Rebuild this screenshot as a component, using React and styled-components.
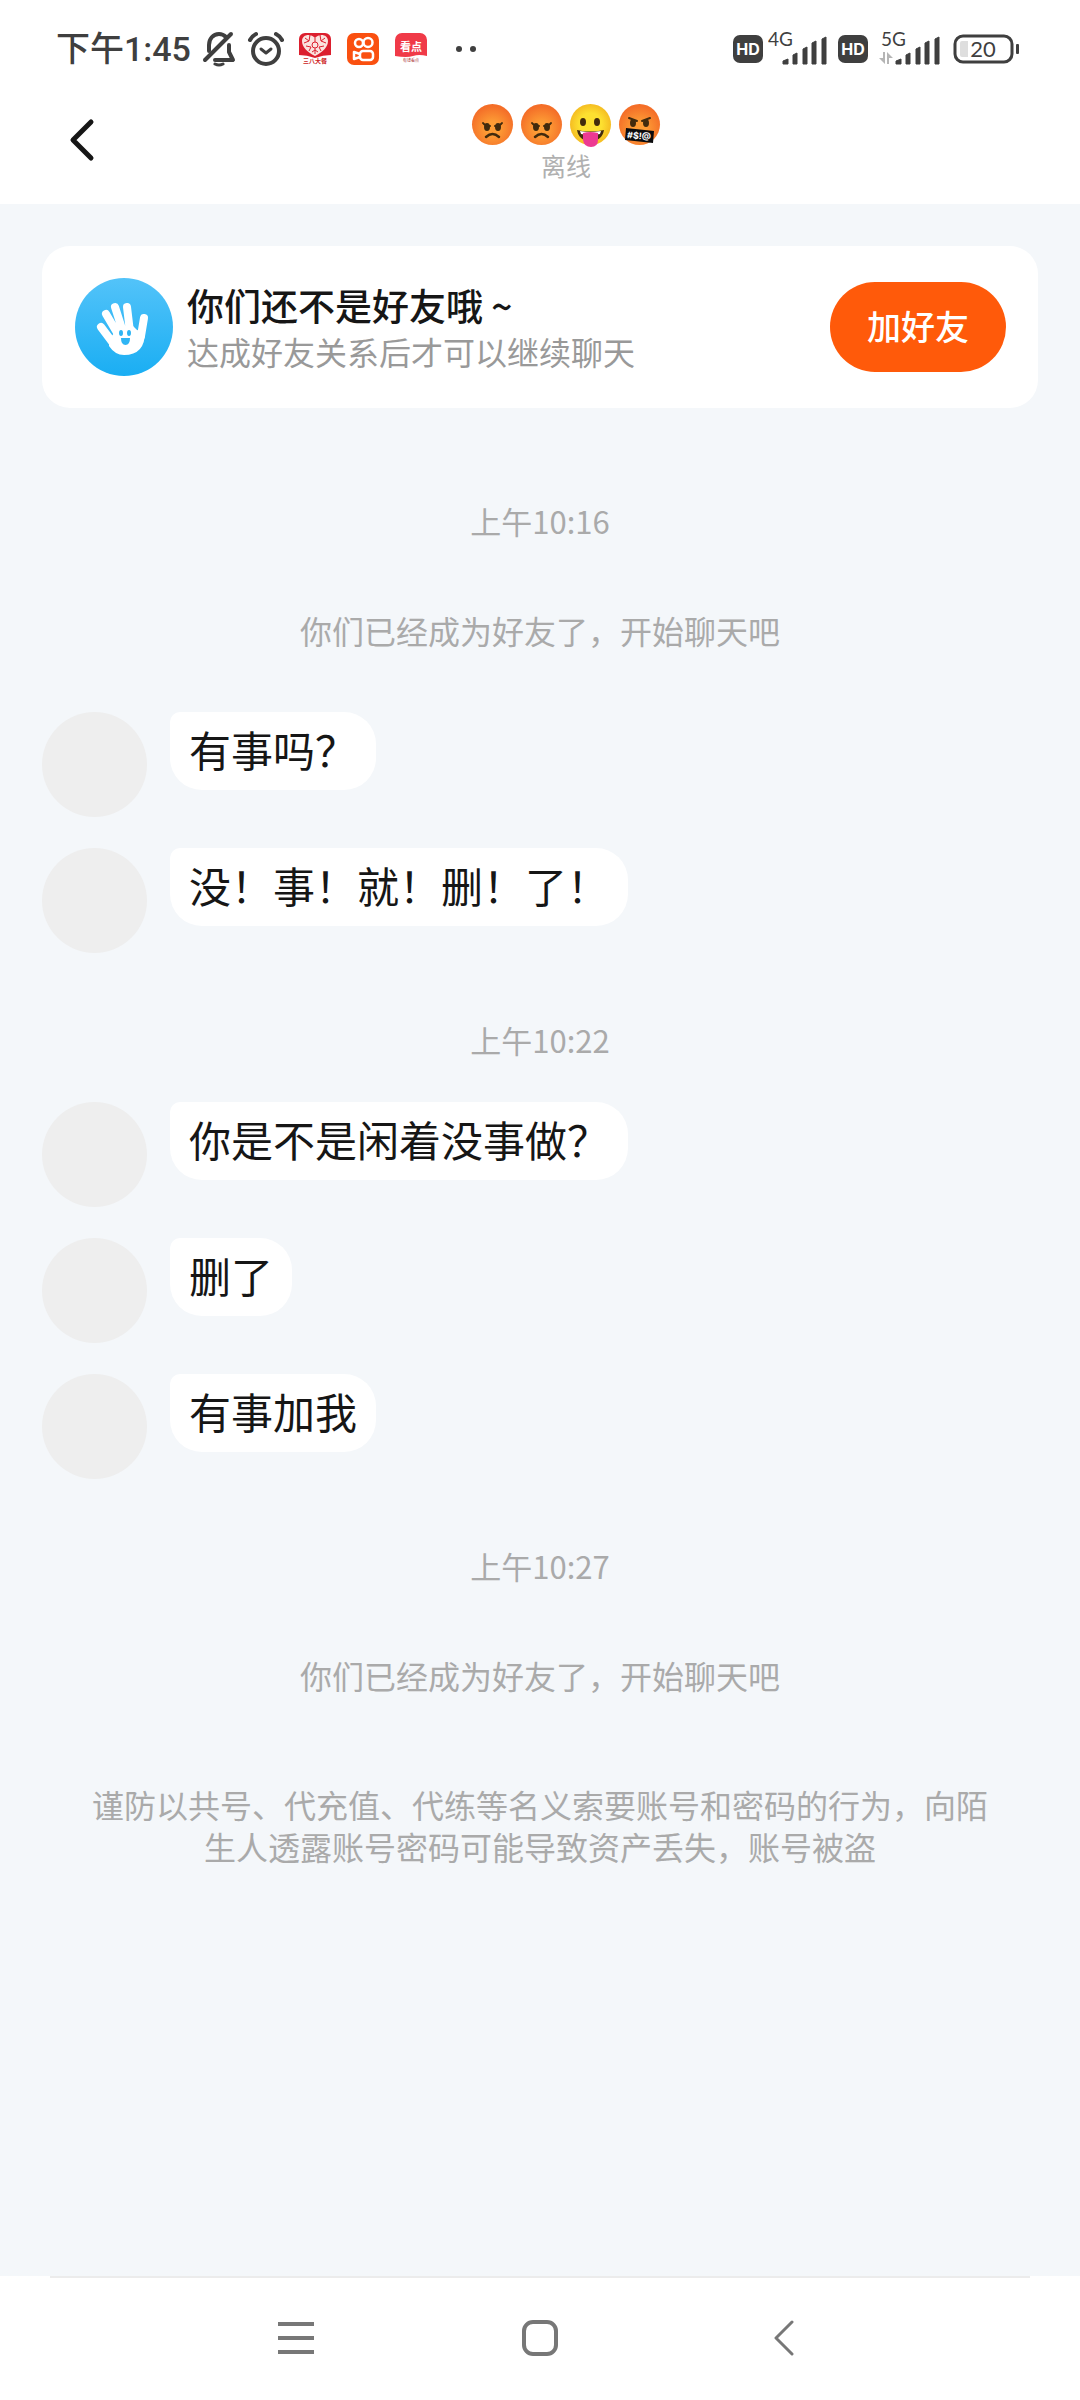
import React from "react";
import styled, { createGlobalStyle } from "styled-components";

const GlobalStyle = createGlobalStyle`
  * {
    box-sizing: border-box;
  }

  body {
    margin: 0;
    background: #f4f7fa;
    font-family: "Noto Sans CJK SC", sans-serif;
  }

  svg {
    display: block;
    flex: none;
  }
`;

const Page = styled.div`
  display: flex;
  flex-direction: column;
  min-height: 100vh;
`;

const StatusBar = styled.div`
  display: flex;
  align-items: center;
  justify-content: space-between;
  height: 98px;
  padding: 0 60px 0 56px;
  background: #fff;
  color: #3f3f3f;
`;

const StatusGroup = styled.div`
  display: flex;
  align-items: center;
  gap: ${({ $gap }) => $gap}px;
`;

const Clock = styled.span`
  font-family: Roboto, "Noto Sans CJK SC", sans-serif;
  font-size: 34px;
  font-weight: 500;
  line-height: 48px;
`;

const Header = styled.header`
  display: flex;
  align-items: center;
  height: 106px;
  padding: 0 56px 20px;
  background: #fff;
`;

const IconButton = styled.button`
  display: flex;
  align-items: center;
  justify-content: center;
  width: ${({ $width }) => $width}px;
  height: 60px;
  padding: 0;
  border: none;
  background: none;
`;

const HeaderTitle = styled.div`
  display: flex;
  flex: 1;
  flex-direction: column;
  align-items: center;
  padding-top: 4px;
`;

const Nickname = styled.h1`
  display: flex;
  gap: 8px;
  margin: 0;
`;

const Presence = styled.span`
  color: #b0b0b0;
  font-size: 25px;
  line-height: 36px;
`;

const Chat = styled.main`
  display: flex;
  flex: 1;
  flex-direction: column;
  padding: 42px 42px 60px;
  background: #f4f7fa;
`;

const FriendCard = styled.section`
  display: flex;
  align-items: center;
  gap: 14px;
  height: 162px;
  margin-bottom: 26px;
  padding: 0 32px 0 33px;
  border-radius: 28px;
  background: #fff;
`;

const CardText = styled.div`
  flex: 1;
`;

const CardTitle = styled.h2`
  margin: 0;
  color: #161616;
  font-size: 37px;
  font-weight: 500;
  line-height: 48px;
`;

const CardHint = styled.p`
  margin: 0;
  color: #999;
  font-size: 32px;
  line-height: 44px;
`;

const AddButton = styled.button`
  width: 176px;
  height: 90px;
  padding: 0 0 3px;
  border: none;
  border-radius: 45px;
  background: #ff5a0a;
  color: #fff;
  font-family: inherit;
  font-size: 34px;
  font-weight: 500;
`;

const Time = styled.time`
  margin-top: 66px;
  color: #aaa;
  font-size: 31px;
  line-height: 42px;
  text-align: center;
`;

const Notice = styled.p`
  margin: 67px 0 20px;
  padding: 0 48px;
  color: #aaa;
  font-size: 32px;
  line-height: 42px;
  text-align: center;
`;

const Messages = styled.ul`
  display: flex;
  flex-direction: column;
  gap: 31px;
  margin: 41px 0 0;
  padding: 0;
  list-style: none;
`;

const Message = styled.li`
  display: flex;
  align-items: flex-start;
  gap: 23px;
`;

const Avatar = styled.div`
  flex: none;
  width: 105px;
  height: 105px;
  border-radius: 50%;
  background: #eee;
`;

const Bubble = styled.div`
  padding: 7px 19px 11px;
  border-radius: 10px 32px 32px 32px;
  background: #fff;
  color: #161616;
  font-size: 42px;
  line-height: 60px;
`;

const NavBar = styled.nav`
  padding: 0 50px;
  background: #fff;
`;

const NavButtons = styled.div`
  display: flex;
  justify-content: center;
  height: 124px;
  padding-top: 30px;
  border-top: 2px solid #ececec;
`;

const BellOff = () => (
  <svg width="34" height="36" viewBox="0 0 34 36" fill="none" stroke="#3f3f3f" strokeWidth="4" strokeLinecap="round" strokeLinejoin="round">
    <path d="M7 20v-6c0-6 4-11 10-11 3 0 5 1 7 3M27 14v7l4 8H13" />
    <path d="M3 29L29 3" />
    <path d="M13 33q4 2 8 0" strokeWidth="3" />
  </svg>
);

const Alarm = () => (
  <svg width="38" height="36" viewBox="0 0 38 36" fill="none" stroke="#3f3f3f" strokeWidth="4" strokeLinecap="round" strokeLinejoin="round">
    <circle cx="19" cy="20" r="13" />
    <path d="M3 9q2-4 6-6M35 9q-2-4-6-6" />
    <path d="M14 18l5 4 5-4" strokeWidth="3" />
  </svg>
);

const HeartApp = () => (
  <svg width="32" height="32" viewBox="0 0 32 32">
    <path d="M0 22V6a6 6 0 016-6h20a6 6 0 016 6v16q-8 0-16 3Q8 22 0 22z" fill="#dc1f2e" />
    <path d="M16 23C8 19 3 14 3 8c0-7 9-8 13-3 4-5 13-4 13 3 0 6-5 11-13 15z" fill="#fbe3df" />
    <g stroke="#dc1f2e" fill="none">
      <path d="M6 5l4 3-5 2M11 2l-1 6M26 5l-4 3 5 2M21 2l1 6M7 13l5 1-2 4M25 13l-5 1 2 4M16 5v4M16 15v6M13 19l3-2 3 2" />
      <circle cx="16" cy="12" r="3" />
    </g>
    <text x="16" y="30" fontSize="6" fontWeight="700" textAnchor="middle" fill="#c22">三八大餐</text>
  </svg>
);

const VideoApp = () => (
  <svg width="32" height="32" viewBox="0 0 32 32">
    <rect width="32" height="32" rx="7" fill="#fa5010" />
    <g fill="none" stroke="#fff" strokeWidth="2.5">
      <circle cx="12" cy="10" r="4" />
      <circle cx="21" cy="9.500" r="4.500" />
      <rect x="13" y="18" width="13" height="9" rx="3" />
      <path d="M13 21l-6-2v7l6-2" strokeLinejoin="round" />
    </g>
  </svg>
);

const NewsApp = () => (
  <svg width="32" height="32" viewBox="0 0 32 32">
    <path d="M0 23V7a7 7 0 017-7h18a7 7 0 017 7v16q-8-2-14 0t-18 0z" fill="#f03a48" />
    <text x="16" y="18" fontSize="11" fontWeight="700" textAnchor="middle" fill="#fff">看点</text>
    <text x="16" y="29" fontSize="4" textAnchor="middle" fill="#a33">有钱看点</text>
  </svg>
);

const MoreDots = () => (
  <svg width="34" height="8" viewBox="0 0 34 8" fill="#3f3f3f">
    <circle cx="16" cy="4" r="3" />
    <circle cx="30" cy="4" r="3" />
  </svg>
);

const HdBadge = () => (
  <svg width="30" height="28" viewBox="0 0 30 28">
    <rect width="30" height="28" rx="7" fill="#3f3f3f" />
    <text x="15" y="20" fontFamily="Inter, sans-serif" fontSize="16" fontWeight="700" textAnchor="middle" fill="#fff">HD</text>
  </svg>
);

// the data arrows need extra room on the left of the bars
const Signal = ({ label, arrows }) => (
  <svg width={arrows ? 75 : 65} height="52" viewBox={arrows ? "-8 -9 75 52" : "0 -9 65 52"} fill="#3f3f3f">
    <text x="0" y="14" fontFamily="Lato, sans-serif" fontSize="19">{label}</text>
    {arrows && <path d="M-2 26h4v-6h2v12zM6 32V20l6 6H8v6z" fill="#b5b5b5" />}
    <path d="M15 32v-3l5-2v5zM25 32v-9l4-2v11zM35 32V17l4-2v17zM44 32V11l4-2v23zM54 32V7l4-2v27z" stroke="#3f3f3f" strokeLinejoin="round" />
  </svg>
);

const Battery = () => (
  <svg width="67" height="30" viewBox="0 0 67 30">
    <rect x="2" y="2" width="57" height="26" rx="8" fill="none" stroke="#3f3f3f" strokeWidth="3" />
    <path d="M7 9q0-2 2-2h6v16H9q-2 0-2-2z" fill="#dedede" />
    <rect x="63" y="10" width="3" height="10" rx="1" fill="#3f3f3f" />
    <text x="30" y="23" fontFamily="Lato, sans-serif" fontSize="22" textAnchor="middle" fill="#3f3f3f">20</text>
  </svg>
);

const AngryFace = ({ censored }) => (
  <svg width="41" height="43" viewBox="0 0 41 43" overflow="visible">
    <defs>
      <radialGradient id="angry" cy="0.6" r="0.55">
        <stop offset="0.3" stopColor="#fd9c35" />
        <stop offset="1" stopColor="#f46e28" />
      </radialGradient>
    </defs>
    <circle cx="20.500" cy="20.500" r="20.500" fill="url(#angry)" />
    {censored ? (
      <g>
        <ellipse cx="14" cy="19" rx="3" ry="4" fill="#422b0d" />
        <ellipse cx="27" cy="19" rx="3" ry="4" fill="#422b0d" />
        <path d="M10 14l8 3M31 14l-8 3" stroke="#422b0d" strokeWidth="2" strokeLinecap="round" />
        <path d="M7 24l28 3-1 12-28-3z" fill="#0b0b0d" />
        <text x="20" y="35" transform="rotate(5 20 32)" fontFamily="Inter, sans-serif" fontSize="9" fontWeight="700" textAnchor="middle" fill="#fff">#$!@</text>
      </g>
    ) : (
      <g>
        <ellipse cx="15" cy="23" rx="3" ry="4" fill="#422b0d" />
        <ellipse cx="26" cy="23" rx="3" ry="4" fill="#422b0d" />
        <path d="M11 19q2 3 7 3M30 19q-2 3-7 3" fill="none" stroke="#422b0d" strokeWidth="2" strokeLinecap="round" />
        <path d="M14 33q6.500-6 13 0" fill="none" stroke="#422b0d" strokeWidth="2.500" strokeLinecap="round" />
      </g>
    )}
  </svg>
);

const TongueFace = () => (
  <svg width="41" height="43" viewBox="0 0 41 43" overflow="visible">
    <defs>
      <radialGradient id="happy" r="0.55">
        <stop offset="0.5" stopColor="#fde030" />
        <stop offset="1" stopColor="#f3b51f" />
      </radialGradient>
    </defs>
    <circle cx="20.500" cy="20.500" r="20.500" fill="url(#happy)" />
    <ellipse cx="13" cy="18" rx="3" ry="4" fill="#422b0d" />
    <ellipse cx="27" cy="18" rx="3" ry="4" fill="#422b0d" />
    <path d="M7 26q13 3 27 0-2 11-13.500 11T7 26z" fill="#422b0d" />
    <path d="M10 27q10 2 21 0l-1 3q-10 2-19 0z" fill="#fff" />
    <path d="M13 29q7-2 15 0v7q0 7-7 7t-8-7z" fill="#ed3a92" />
  </svg>
);

const WavingHand = () => (
  <svg width="98" height="98" viewBox="0 0 98 98">
    <defs>
      <linearGradient id="sky" x2="0" y2="1">
        <stop stopColor="#53c3f9" />
        <stop offset="1" stopColor="#1aaef3" />
      </linearGradient>
    </defs>
    <circle cx="49" cy="49" r="49" fill="url(#sky)" />
    <path d="M26 49L38 65M31 36L44 58M40 29L48 54M52 29L55 54M69 40L66 58" stroke="#fff" strokeWidth="8" strokeLinecap="round" />
    <path d="M34 62L44 48h14l4 4 8 2q0 23-21 23-9 0-15-9z" fill="#fff" />
    <ellipse cx="46" cy="55" rx="2" ry="3" fill="#2fb5f4" />
    <ellipse cx="54" cy="55" rx="2" ry="3" fill="#2fb5f4" />
    <path d="M46 60h9q0 7-4.500 7T46 60z" fill="#2fb5f4" />
  </svg>
);

const MessageList = ({ items }) => (
  <Messages>
    {items.map((text) => (
      <Message key={text}>
        <Avatar />
        <Bubble>{text}</Bubble>
      </Message>
    ))}
  </Messages>
);

const App = () => {
  return (
    <>
      <GlobalStyle />
      <Page>
        <StatusBar>
          <StatusGroup $gap={14}>
            <StatusGroup $gap={11}>
              <Clock>下午1:45</Clock>
              <BellOff />
              <Alarm />
            </StatusGroup>
            <StatusGroup $gap={16}>
              <HeartApp />
              <VideoApp />
              <NewsApp />
              <MoreDots />
            </StatusGroup>
          </StatusGroup>
          <StatusGroup $gap={5}>
            <HdBadge />
            <Signal label="4G" />
            <HdBadge />
            <Signal label="5G" arrows />
            <Battery />
          </StatusGroup>
        </StatusBar>

        <Header>
          <IconButton $width={52} aria-label="返回">
            <svg width="28" height="46" viewBox="0 0 28 46" fill="none" stroke="#161616" strokeWidth="5" strokeLinecap="round" strokeLinejoin="round">
              <path d="M23 4L5 22l18 18" />
            </svg>
          </IconButton>
          <HeaderTitle>
            <Nickname>
              <AngryFace />
              <AngryFace />
              <TongueFace />
              <AngryFace censored />
            </Nickname>
            <Presence>离线</Presence>
          </HeaderTitle>
        </Header>

        <Chat>
          <FriendCard>
            <WavingHand />
            <CardText>
              <CardTitle>你们还不是好友哦 ~</CardTitle>
              <CardHint>达成好友关系后才可以继续聊天</CardHint>
            </CardText>
            <AddButton>加好友</AddButton>
          </FriendCard>

          <Time>上午10:16</Time>
          <Notice>你们已经成为好友了，开始聊天吧</Notice>
          <MessageList items={["有事吗？", "没！事！就！删！了！"]} />

          <Time>上午10:22</Time>
          <MessageList items={["你是不是闲着没事做？", "删了", "有事加我"]} />

          <Time>上午10:27</Time>
          <Notice>你们已经成为好友了，开始聊天吧</Notice>
          <Notice>谨防以共号、代充值、代练等名义索要账号和密码的行为，向陌生人透露账号密码可能导致资产丢失，账号被盗</Notice>
        </Chat>

        <NavBar>
          <NavButtons>
            <IconButton $width={244} aria-label="最近任务">
              <svg width="36" height="36" viewBox="0 0 36 36" stroke="#777" strokeWidth="4">
                <path d="M0 4h36M0 18h36M0 32h36" />
              </svg>
            </IconButton>
            <IconButton $width={244} aria-label="主屏幕">
              <svg width="36" height="36" viewBox="0 0 36 36" fill="none" stroke="#777" strokeWidth="4">
                <rect x="2" y="2" width="32" height="32" rx="9" />
              </svg>
            </IconButton>
            <IconButton $width={244} aria-label="后退">
              <svg width="22" height="36" viewBox="0 0 22 36" fill="none" stroke="#777" strokeWidth="3" strokeLinecap="round" strokeLinejoin="round">
                <path d="M19 2L3 18l16 16" />
              </svg>
            </IconButton>
          </NavButtons>
        </NavBar>
      </Page>
    </>
  );
};

export default App;
